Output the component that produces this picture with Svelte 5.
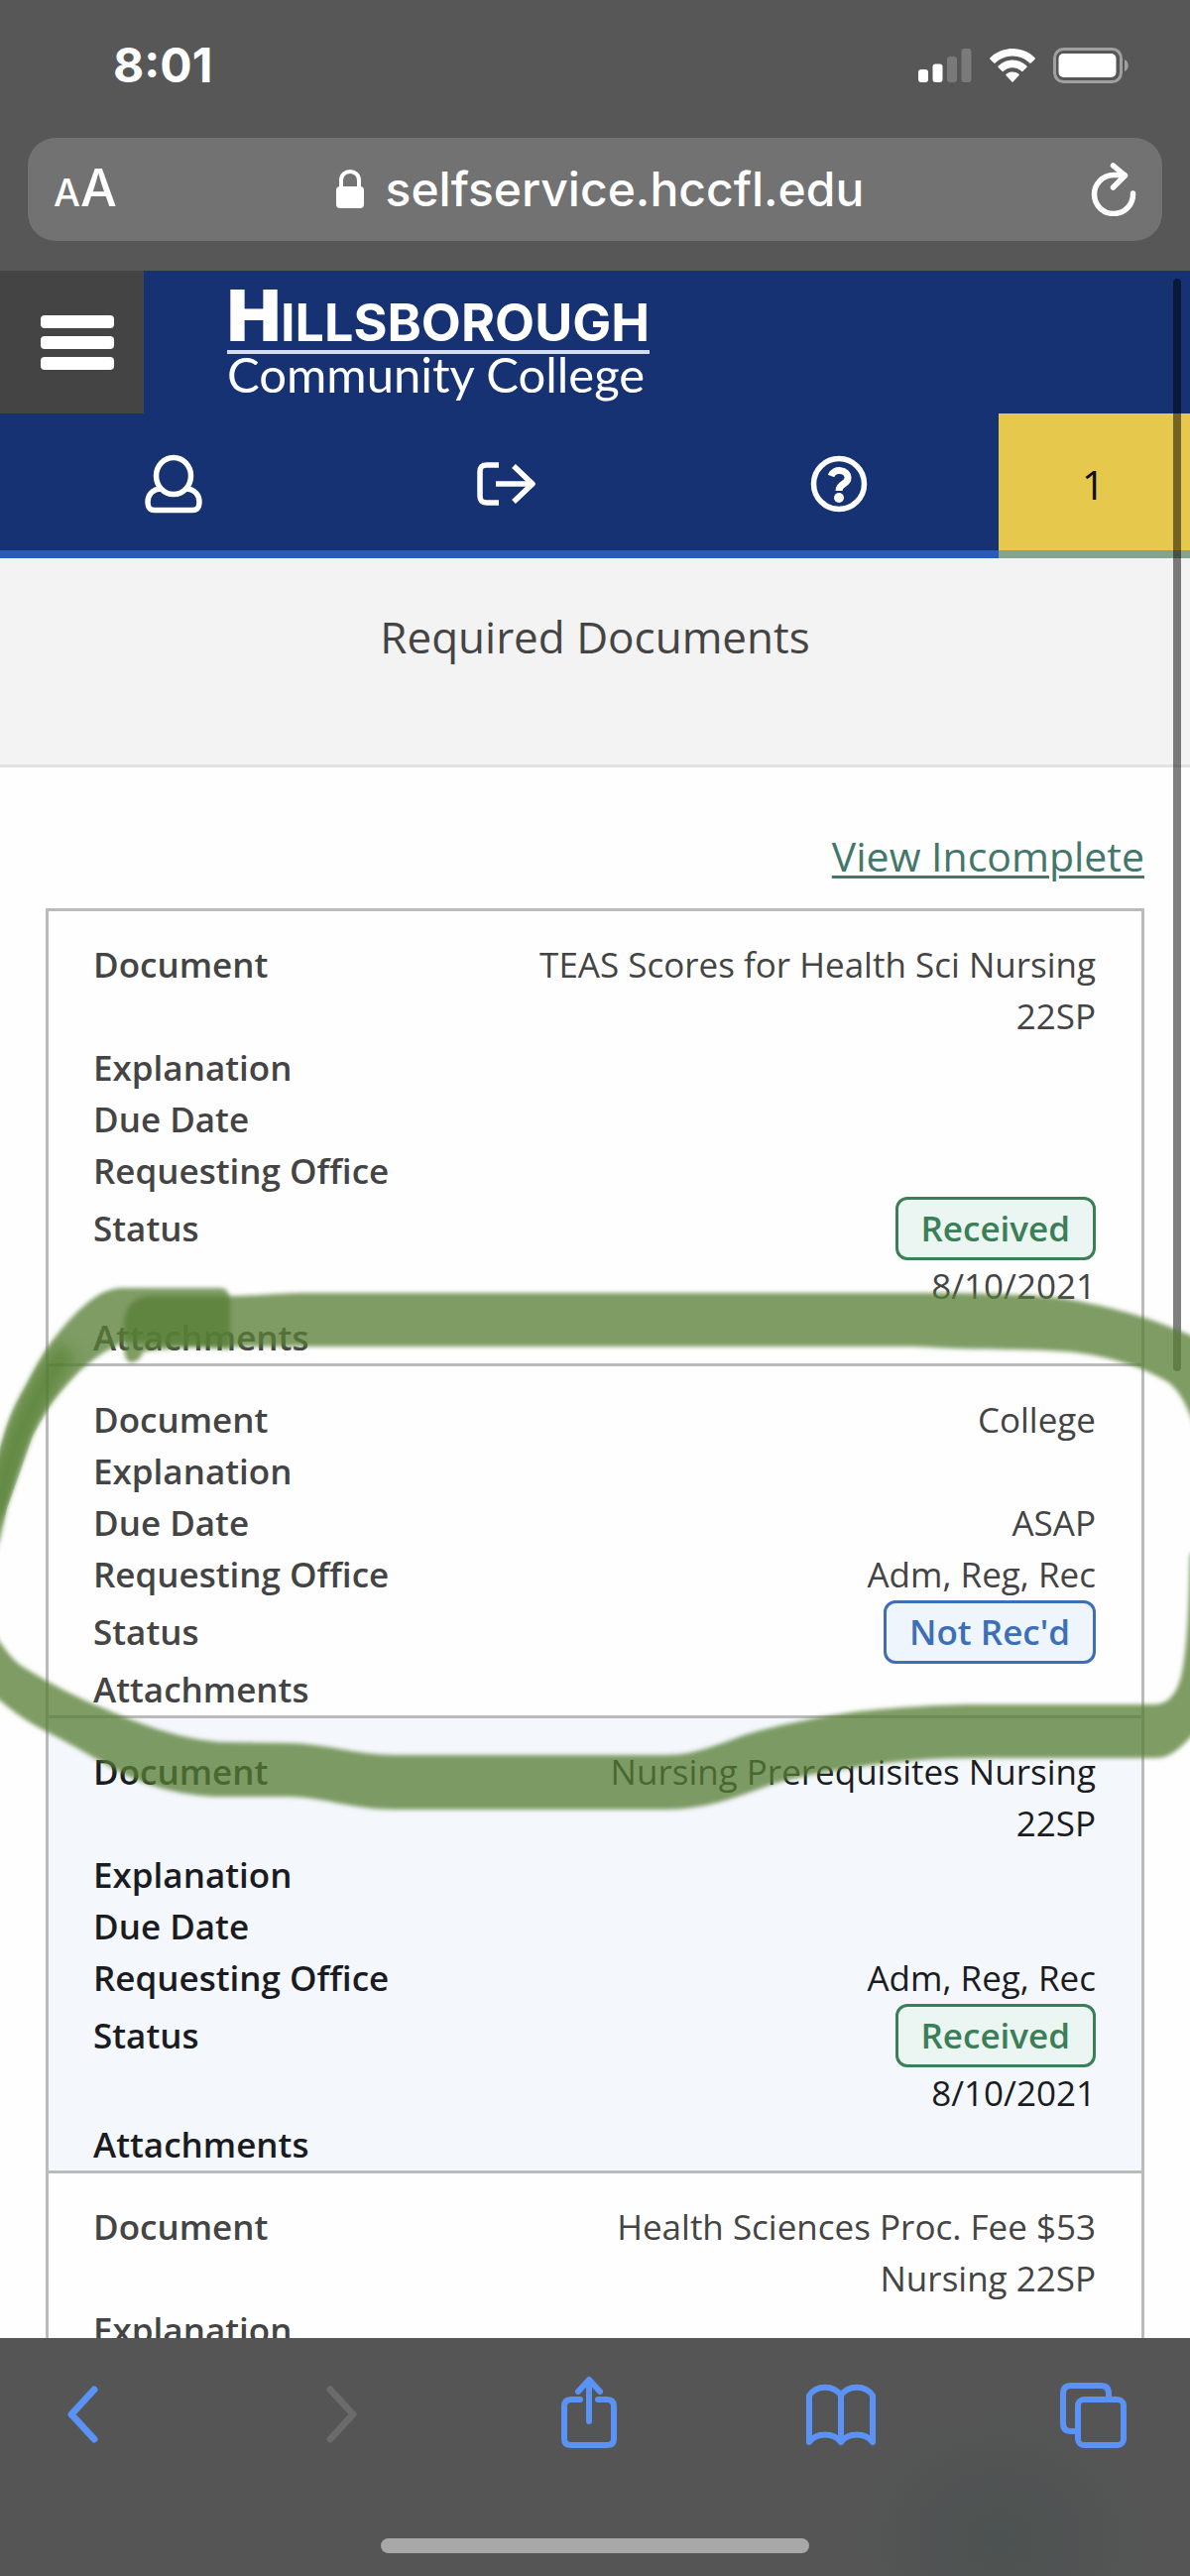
<script>
  const documents = [
    {
      fields: [
        ['Document', 'TEAS Scores for Health Sci Nursing 22SP'],
        ['Explanation', ''],
        ['Due Date', ''],
        ['Requesting Office', ''],
        ['Status', 'Received'],
        ['Attachments', '']
      ],
      tone: 'received',
      date: '8/10/2021'
    },
    {
      fields: [
        ['Document', 'College'],
        ['Explanation', ''],
        ['Due Date', 'ASAP'],
        ['Requesting Office', 'Adm, Reg, Rec'],
        ['Status', "Not Rec'd"],
        ['Attachments', '']
      ],
      tone: 'missing'
    },
    {
      fields: [
        ['Document', 'Nursing Prerequisites Nursing 22SP'],
        ['Explanation', ''],
        ['Due Date', ''],
        ['Requesting Office', 'Adm, Reg, Rec'],
        ['Status', 'Received'],
        ['Attachments', '']
      ],
      tone: 'received',
      date: '8/10/2021',
      active: true
    },
    {
      fields: [
        ['Document', 'Health Sciences Proc. Fee $53 Nursing 22SP'],
        ['Explanation', '']
      ]
    }
  ];
</script>

<div class="phone">
  <div class="status-bar">
    <span class="time">8:01</span>
    <div class="indicators">
      <svg width="54" height="34" viewBox="0 0 54 34" aria-label="Signal">
        <rect x="0" y="21" width="10" height="13" rx="3" fill="#fff" />
        <rect x="14.500" y="15.500" width="10" height="18.500" rx="3" fill="#fff" />
        <rect x="29" y="8" width="10" height="26" rx="3" fill="#7a7a7a" />
        <rect x="43.500" y="0" width="10" height="34" rx="3" fill="#7a7a7a" />
      </svg>
      <svg width="46" height="34" viewBox="0 0 46 34" fill="#fff" aria-label="Wi-Fi">
        <path d="M23 0C14 0 6 3.500 .5 9.200a1 1 0 0 0 0 1.500l3.700 3.700a1 1 0 0 0 1.500 0A25 25 0 0 1 23 7.500a25 25 0 0 1 17.300 6.900a1 1 0 0 0 1.500 0l3.700-3.700a1 1 0 0 0 0-1.500C40 3.500 32 0 23 0Z" />
        <path d="M23 11.500c-5.500 0-10.500 2.300-14.300 6a1 1 0 0 0 0 1.500l3.800 3.700a1 1 0 0 0 1.500 0A13.500 13.500 0 0 1 23 19.200c3.500 0 6.500 1.300 9 3.500a1 1 0 0 0 1.500 0l3.800-3.700a1 1 0 0 0 0-1.500c-3.800-3.700-8.800-6-14.300-6Z" />
        <path d="M23 23.500c-2.600 0-4.800 .9-6.400 2.200a1 1 0 0 0 0 1.500l5.600 6.100a1 1 0 0 0 1.600 0l5.600-6.100a1 1 0 0 0 0-1.500c-1.600-1.300-3.800-2.200-6.400-2.200Z" />
      </svg>
      <svg width="76" height="36" viewBox="0 0 76 36" aria-label="Battery">
        <rect x="1.500" y="1.500" width="67" height="33" rx="9" fill="none" stroke="#a0a0a0" stroke-width="3" />
        <rect x="5.500" y="6" width="58" height="24" rx="5" fill="#fff" />
        <path d="M72 12c5 2 5 10 0 12Z" fill="#a0a0a0" />
      </svg>
    </div>
  </div>

  <div class="address-bar">
    <button class="text-size" aria-label="Page settings"><small>A</small>A</button>
    <div class="host">
      <svg width="28" height="40" viewBox="0 0 28 40" aria-hidden="true">
        <rect x="0" y="17" width="28" height="22" rx="4" fill="#fff" />
        <path d="M5 19V11C5 -1 23 -1 23 11V19" fill="none" stroke="#fff" stroke-width="4" />
      </svg>
      <span>selfservice.hccfl.edu</span>
    </div>
    <button class="reload" aria-label="Reload">
      <svg width="46" height="54" viewBox="0 0 46 54" fill="none" stroke="#fff" stroke-width="5.500" stroke-linecap="round" stroke-linejoin="round">
        <path d="M42.500 31A19.500 19.500 0 1 1 23 12.500H34" />
        <path d="M22.500 3L34.500 13L22.500 25" />
      </svg>
    </button>
  </div>

  <div class="viewport">
    <header>
      <div class="brand-row">
        <button class="menu" aria-label="Menu"><i></i><i></i><i></i></button>
        <a class="brand" href="#home">
          <span class="brand-top"><b>H</b>ILLSBOROUGH</span>
          <span class="brand-bottom">Community College</span>
        </a>
      </div>
      <nav>
        <a href="#account" aria-label="Account">
          <svg width="60" height="60" viewBox="0 0 60 60" fill="none" stroke="#fff" stroke-width="5.500">
            <ellipse cx="30" cy="22" rx="17.500" ry="18.500" />
            <path d="M18 35C8 35 4 42 4 48C4 54 6 56.500 11 56.500H49C54 56.500 56 54 56 48C56 42 52 35 42 35" />
          </svg>
        </a>
        <a href="#signout" aria-label="Sign out">
          <svg width="60" height="46" viewBox="0 0 60 46" fill="none" stroke="#fff" stroke-width="5.500">
            <path d="M23 4H11C6 4 4 6 4 11V35C4 40 6 42 11 42H23" />
            <path d="M20 23H57" />
            <path d="M38 5L57 23L38 41" stroke-linejoin="round" />
          </svg>
        </a>
        <a href="#help" aria-label="Help">
          <svg width="58" height="58" viewBox="0 0 58 58" fill="none" stroke="#fff">
            <circle cx="29" cy="29" r="25.500" stroke-width="5.500" />
            <path d="M21 21C24 13 38 14 38 23C38 30 29 28 29 36" stroke-width="7" />
            <circle cx="29" cy="43" r="5" fill="#fff" stroke="none" />
          </svg>
        </a>
        <a class="notice" href="#notifications">1</a>
      </nav>
    </header>

    <div class="title"><h1>Required Documents</h1></div>

    <main>
      <a class="toggle" href="#incomplete">View Incomplete</a>
      <div class="cards">
        {#each documents as doc}
          <dl class:active={doc.active}>
            {#each doc.fields as [label, value]}
              <div class="field" class:status={label === 'Status'}>
                <dt>{label}</dt>
                <dd>
                  {#if label === 'Status'}
                    <span class="badge {doc.tone}">{value}</span>
                    {#if doc.date}<span class="date">{doc.date}</span>{/if}
                  {:else}
                    {value}
                  {/if}
                </dd>
              </div>
            {/each}
          </dl>
        {/each}
      </div>
    </main>

    <div class="scroll-thumb"></div>

    <svg class="marker" viewBox="0 272 1200 2085" aria-hidden="true">
      <defs>
        <filter id="soft" x="-5%" y="-5%" width="110%" height="110%"><feGaussianBlur stdDeviation="2" /></filter>
        <filter id="softer" x="-50%" y="-20%" width="200%" height="140%"><feGaussianBlur stdDeviation="8" /></filter>
        <clipPath id="loop-left"><path d="M-10 1480L0 1459L10 1426L27 1394L48 1356L77 1323L103 1302L123 1298V1355L103 1363L80 1382L53 1413L33 1447L20 1484L7 1520L0 1551L-10 1580Z" /></clipPath>
      </defs>
      <g fill="#597e37" fill-opacity=".77" filter="url(#soft)">
        <path d="M125 1336C125 1316 136 1306 154 1306L232 1306C262 1306 280 1303 312 1303L930 1303C1000 1303 1050 1305 1075 1309C1120 1317 1160 1327 1210 1350V1450C1198 1420 1192 1404 1178 1393C1150 1376 1116 1367 1085 1363C1050 1359 1000 1361 941 1358C930 1357 900 1357 880 1357L210 1357C180 1358 160 1360 145 1362C141 1369 139 1373 132 1373C127 1372 125 1366 125 1355Z" />
        <path d="M1210 1560L1200 1567C1199 1610 1198 1660 1191 1690C1186 1708 1178 1718 1163 1718L983 1718C950 1718 880 1722 845 1728C815 1733 785 1739 753 1748C725 1758 700 1769 673 1769L398 1769C360 1769 325 1757 291 1757L222 1756C175 1752 135 1735 100 1720C80 1712 50 1697 23 1680C14 1674 5 1664 -10 1640V1708L0 1714C12 1724 24 1734 48 1746C80 1762 105 1779 133 1792C155 1802 190 1811 222 1811L291 1811C330 1812 355 1824 398 1824L673 1824C715 1823 740 1812 761 1805C790 1793 825 1787 860 1782C900 1775 940 1772 983 1772L1166 1772C1180 1772 1192 1762 1210 1740Z" />
        <path d="M-10 1490L0 1459C8 1430 16 1413 27 1394C40 1368 55 1345 77 1323C96 1305 108 1298 125 1298L223 1298C231 1299 232 1306 232 1315L232 1360L127 1352C100 1363 90 1374 80 1382C60 1402 45 1421 33 1447C25 1467 16 1494 7 1520L0 1551L-10 1580Z" />
      </g>
      <g clip-path="url(#loop-left)">
        <path d="M-4 1530C8 1470 22 1425 68 1360" fill="none" stroke="#4d7a2a" stroke-width="22" stroke-opacity=".6" filter="url(#softer)" />
      </g>
      <g fill="none" stroke="#4d7a2a" stroke-width="14" stroke-opacity=".6">
        <path d="M1202 1362L1203 1402" filter="url(#softer)" />
        <path d="M1202 1650L1203 1730" filter="url(#softer)" />
      </g>
    </svg>
  </div>

  <footer>
    <div class="tools">
      <button aria-label="Back">
        <svg width="72" height="72" viewBox="0 0 72 72" class="chevron"><path d="M48 11L25 36L48 61" /></svg>
      </button>
      <button aria-label="Forward" disabled>
        <svg width="72" height="72" viewBox="0 0 72 72" class="chevron"><path d="M31 11L54 36L31 61" /></svg>
      </button>
      <button aria-label="Share">
        <svg width="72" height="72" viewBox="0 0 72 72"><path d="M28 21H19Q12 21 12 28V61Q12 67 19 67H55Q62 67 62 61V28Q62 21 55 21H46M37 43V3M26 13L37 1L48 13" /></svg>
      </button>
      <button aria-label="Bookmarks">
        <svg width="72" height="72" viewBox="0 0 72 72"><path d="M37 64V17C30 6 12 6 5 17V64C12 54 30 54 37 64C44 54 62 54 69 64V17C62 6 44 6 37 17" /></svg>
      </button>
      <button aria-label="Tabs">
        <svg width="72" height="72" viewBox="0 0 72 72"><rect x="21" y="21" width="46" height="46" rx="6" /><path d="M21 53H14Q6 53 6 45V15Q6 7 14 7H44Q52 7 52 15V21" /></svg>
      </button>
    </div>
    <div class="home-indicator"></div>
  </footer>
</div>

<style>
  :global(body) {
    margin: 0;
  }
  .phone {
    display: flex;
    flex-direction: column;
    height: 100vh;
    background: #575757;
    color: #444;
    font-family: 'Open Sans', 'Noto Sans', sans-serif;
    overflow: hidden;
  }
  button {
    border: 0;
    padding: 0;
    background: none;
    color: inherit;
    font: inherit;
  }
  svg {
    display: block;
  }

  .status-bar {
    display: flex;
    flex: none;
    align-items: center;
    justify-content: space-between;
    height: 131px;
    padding: 0 62px 0 114px;
    color: #fff;
  }
  .time {
    font: 700 48px/56px Inter, sans-serif;
  }
  .indicators {
    display: flex;
    align-items: center;
    gap: 18px;
  }
  .address-bar {
    display: flex;
    flex: none;
    align-items: center;
    justify-content: space-between;
    height: 104px;
    margin: 8px 28px 30px;
    padding: 0 26px;
    box-sizing: border-box;
    border-radius: 28px;
    background: #727272;
    color: #fff;
    font-family: Inter, sans-serif;
  }
  .text-size {
    padding-top: 2px;
    font-size: 52px;
    font-weight: 500;
    line-height: 60px;
  }
  .text-size small {
    font-size: 38px;
  }
  .host {
    display: flex;
    align-items: center;
    gap: 22px;
    padding-right: 8px;
    font-size: 48px;
    font-weight: 500;
    line-height: 56px;
  }

  .viewport {
    position: relative;
    flex: 1;
    min-height: 0;
    overflow: hidden;
    background: #fefefe;
  }
  header {
    background: #163273;
  }
  .brand-row {
    display: flex;
    height: 144px;
  }
  .menu {
    display: flex;
    flex-direction: column;
    align-items: center;
    justify-content: center;
    gap: 8px;
    width: 145px;
    padding-left: 10px;
    background: #444;
  }
  .menu i {
    width: 74px;
    height: 13px;
    border-radius: 4px;
    background: #fff;
  }
  .brand {
    display: flex;
    flex-direction: column;
    margin-left: 84px;
    padding-top: 20px;
    color: #fff;
    text-decoration: none;
    white-space: nowrap;
  }
  .brand-top {
    padding-bottom: 2px;
    border-bottom: 4px solid #d5dcec;
    font: 700 52px/50px Inter, sans-serif;
  }
  .brand-top b {
    font-size: 72px;
  }
  .brand-bottom {
    font: 400 49px/40px Lato, sans-serif;
  }
  nav {
    display: grid;
    grid-template-columns: 1fr 1fr 1fr 193px;
    height: 146px;
  }
  nav a {
    display: flex;
    align-items: center;
    justify-content: center;
    box-sizing: border-box;
    padding: 4px 0 0 14px;
    border-bottom: 8px solid #285ab8;
  }
  nav .notice {
    padding: 4px 2px 0 0;
    border-color: #84a38d;
    background: #e6c84c;
    color: #111;
    font-size: 41px;
    text-decoration: none;
  }
  .title {
    padding: 49px 0 99px;
    border-bottom: 3px solid #e2e2e2;
    background: #f3f3f3;
    text-align: center;
  }
  h1 {
    margin: 0;
    font-size: 44px;
    font-weight: 400;
    line-height: 60px;
  }
  main {
    display: flex;
    flex-direction: column;
    padding: 59px 46px 0;
  }
  .toggle {
    align-self: flex-end;
    margin-bottom: 23px;
    color: #43776a;
    font-size: 41px;
    line-height: 60px;
    text-decoration-thickness: 3px;
    text-underline-offset: 4px;
  }
  .cards {
    border: 3px solid #bbb;
  }
  dl {
    margin: 0;
    padding: 28px 46px 0 45px;
    border-bottom: 3px solid #bbb;
    font-size: 35px;
    line-height: 52px;
  }
  dl.active {
    background: #f4f7fc;
    color: #1a1c22;
  }
  .field {
    display: grid;
    grid-template-columns: 43% 57%;
    min-height: 52px;
  }
  .status {
    min-height: 64px;
  }
  .status dt {
    line-height: 64px;
  }
  dt {
    font-weight: 600;
  }
  dd {
    margin: 0;
    text-align: right;
  }
  .status dd {
    display: flex;
    flex-direction: column;
    align-items: flex-end;
  }
  .badge {
    box-sizing: border-box;
    height: 64px;
    padding: 0 23px;
    border: 3px solid;
    border-radius: 12px;
    font-weight: 600;
    line-height: 58px;
  }
  .received {
    background: #ebf5f1;
    color: #3a7f57;
  }
  .missing {
    background: #eef5fd;
    color: #3d6fb5;
  }
  .scroll-thumb {
    position: absolute;
    top: 8px;
    right: 9px;
    width: 8px;
    height: 1102px;
    border-radius: 4px;
    background: rgba(0, 0, 0, 0.5);
  }
  .marker {
    position: absolute;
    top: 0;
    left: 0;
    width: 100%;
    pointer-events: none;
  }

  footer {
    display: flex;
    flex: none;
    flex-direction: column;
    align-items: center;
    justify-content: space-between;
    height: 240px;
    padding: 41px 0 23px;
    box-sizing: border-box;
    background: radial-gradient(ellipse 150px 130px at 84% 85%, #4c5251, #555), #555;
  }
  .tools {
    display: flex;
    align-self: stretch;
    justify-content: space-between;
    padding: 0 62px 0 47px;
  }
  .tools svg {
    overflow: visible;
    fill: none;
    stroke: #5b92f5;
    stroke-width: 6px;
    stroke-linecap: round;
    stroke-linejoin: round;
  }
  .tools .chevron {
    stroke-width: 7px;
  }
  .tools button:disabled svg {
    stroke: #6b6b6b;
  }
  .home-indicator {
    width: 36%;
    height: 15px;
    border-radius: 8px;
    background: #a8a8a8;
  }
</style>
